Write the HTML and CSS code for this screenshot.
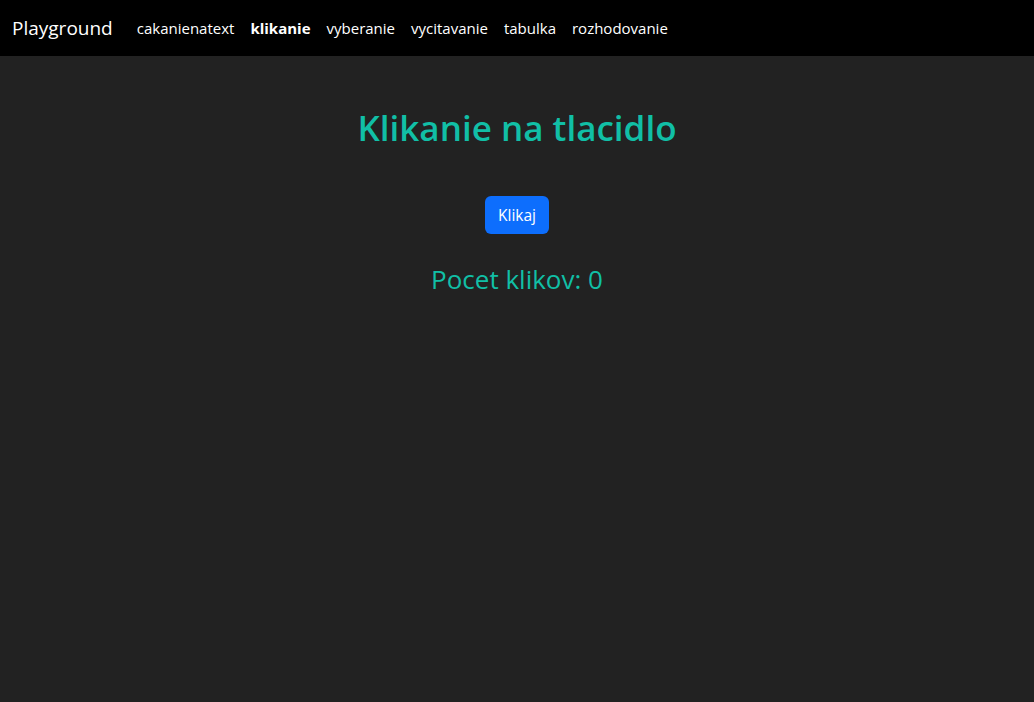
FILE: index.html
```html
<!DOCTYPE html>
<html lang="sk">
<head>
<meta charset="utf-8">
<title>Playground</title>
<link rel="stylesheet" href="styles.css">
</head>
<body>
<nav class="navbar">
  <a class="brand" href="#">Playground</a>
  <ul class="nav">
    <li><a class="nav-link" href="#">cakanienatext</a></li>
    <li><a class="nav-link active" href="#">klikanie</a></li>
    <li><a class="nav-link" href="#">vyberanie</a></li>
    <li><a class="nav-link" href="#">vycitavanie</a></li>
    <li><a class="nav-link" href="#">tabulka</a></li>
    <li><a class="nav-link" href="#">rozhodovanie</a></li>
  </ul>
</nav>
<main class="content">
  <h1 class="title">Klikanie na tlacidlo</h1>
  <button class="btn" type="button">Klikaj</button>
  <p class="count">Pocet klikov: 0</p>
</main>
</body>
</html>
```
FILE: styles.css
```css
* { box-sizing: border-box; }
html, body { margin: 0; height: 100%; }
body {
  background: #222222;
  font-family: "Open Sans", "Noto Sans", sans-serif;
  color: #fff;
}
.navbar {
  height: 56px;
  background: #000;
  display: flex;
  align-items: center;
  padding: 0 12px;
}
.brand {
  color: #fff;
  text-decoration: none;
  font-size: 19px;
  margin-right: 16px;
}
.nav {
  list-style: none;
  margin: 0;
  padding: 0;
  display: flex;
}
.nav-link {
  display: block;
  padding: 8px;
  color: #fff;
  text-decoration: none;
  font-size: 15px;
}
.nav-link.active { font-weight: 700; }
.content {
  display: flex;
  flex-direction: column;
  align-items: center;
  padding-top: 51px;
}
.title {
  margin: 0 0 47px;
  color: #11bfa6;
  font-size: 35px;
  font-weight: 600;
  line-height: 1.2;
}
.btn {
  background: #0d6efd;
  color: #fff;
  border: 0;
  border-radius: 6px;
  font-family: inherit;
  font-size: 15.5px;
  height: 38px;
  padding: 0 13px;
}
.count {
  margin: 30px 0 0;
  color: #11bfa6;
  font-size: 26px;
  line-height: 1.2;
}
```
